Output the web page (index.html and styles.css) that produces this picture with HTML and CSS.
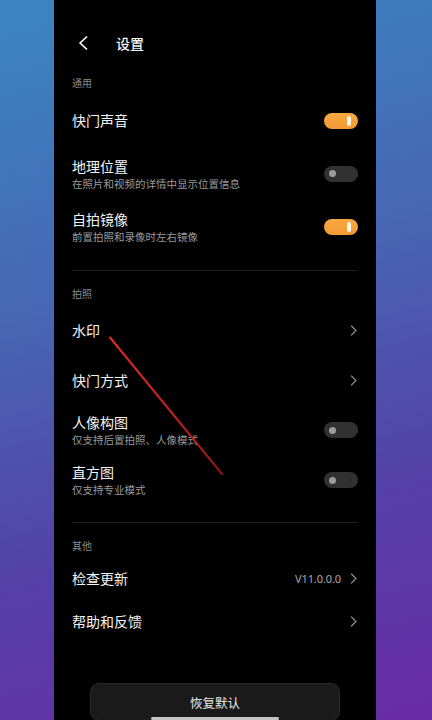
FILE: index.html
```html
<!DOCTYPE html>
<html lang="zh-CN">
<head>
<meta charset="utf-8">
<title>设置</title>
<link rel="stylesheet" href="styles.css">
</head>
<body>
<div class="phone">
  <header class="topbar">
    <svg class="back" width="10" height="14" viewBox="0 0 10 14"><path d="M8.5 1 L2 7 L8.5 13" fill="none" stroke="#fff" stroke-width="1.7" stroke-linecap="round" stroke-linejoin="round"/></svg>
    <h1 class="page-title">设置</h1>
  </header>

  <section class="section sec-general">
    <div class="group-label">通用</div>
    <div class="row">
      <div class="text"><div class="title">快门声音</div></div>
      <span class="switch on"></span>
    </div>
    <div class="row">
      <div class="text"><div class="title">地理位置</div><div class="sub">在照片和视频的详情中显示位置信息</div></div>
      <span class="switch"></span>
    </div>
    <div class="row">
      <div class="text"><div class="title">自拍镜像</div><div class="sub">前置拍照和录像时左右镜像</div></div>
      <span class="switch on"></span>
    </div>
  </section>

  <section class="section sec-photo">
    <div class="group-label">拍照</div>
    <div class="row">
      <div class="text"><div class="title">水印</div></div>
      <svg class="chev" width="7" height="11" viewBox="0 0 7 11"><path d="M1.5 1 L6 5.5 L1.5 10" fill="none" stroke="#8a8a8a" stroke-width="1.2" stroke-linecap="round" stroke-linejoin="round"/></svg>
    </div>
    <div class="row">
      <div class="text"><div class="title">快门方式</div></div>
      <svg class="chev" width="7" height="11" viewBox="0 0 7 11"><path d="M1.5 1 L6 5.5 L1.5 10" fill="none" stroke="#8a8a8a" stroke-width="1.2" stroke-linecap="round" stroke-linejoin="round"/></svg>
    </div>
    <div class="row">
      <div class="text"><div class="title">人像构图</div><div class="sub">仅支持后置拍照、人像模式</div></div>
      <span class="switch"></span>
    </div>
    <div class="row">
      <div class="text"><div class="title">直方图</div><div class="sub">仅支持专业模式</div></div>
      <span class="switch"></span>
    </div>
  </section>

  <section class="section sec-other">
    <div class="group-label">其他</div>
    <div class="row">
      <div class="text"><div class="title">检查更新</div></div>
      <div class="trail"><span class="value">V11.0.0.0</span>
      <svg class="chev" width="7" height="11" viewBox="0 0 7 11"><path d="M1.5 1 L6 5.5 L1.5 10" fill="none" stroke="#8a8a8a" stroke-width="1.2" stroke-linecap="round" stroke-linejoin="round"/></svg></div>
    </div>
    <div class="row">
      <div class="text"><div class="title">帮助和反馈</div></div>
      <svg class="chev" width="7" height="11" viewBox="0 0 7 11"><path d="M1.5 1 L6 5.5 L1.5 10" fill="none" stroke="#8a8a8a" stroke-width="1.2" stroke-linecap="round" stroke-linejoin="round"/></svg>
    </div>
  </section>

  <div class="footer">
    <button class="reset">恢复默认</button>
  </div>

  <div class="home-bar"></div>

  <svg class="annotation" width="322" height="720" viewBox="0 0 322 720">
    <defs>
      <linearGradient id="redfade" x1="56" y1="337" x2="168" y2="474" gradientUnits="userSpaceOnUse">
        <stop offset="0" stop-color="#e42a2a"/>
        <stop offset="0.6" stop-color="#c02020"/>
        <stop offset="1" stop-color="#8a1818"/>
      </linearGradient>
    </defs>
    <line x1="56" y1="337.5" x2="168" y2="474" stroke="url(#redfade)" stroke-width="2" stroke-linecap="round"/>
  </svg>
</div>
</body>
</html>
```
FILE: styles.css
```css
* { box-sizing: border-box; }

html, body {
  margin: 0;
  padding: 0;
  width: 432px;
  height: 720px;
  overflow: hidden;
}

body {
  background: linear-gradient(165deg, #3a86c2 0%, #4767b4 38%, #553fa6 72%, #6a2ca6 100%);
  font-family: "Noto Sans CJK SC", "Noto Sans", sans-serif;
  display: flex;
  justify-content: flex-start;
}

.phone {
  position: relative;
  width: 322px;
  height: 720px;
  margin-left: 54px;
  background: #000;
  overflow: hidden;
}

.topbar {
  height: 60px;
  padding: 26px 0 0 24px;
  display: flex;
  align-items: center;
}

.back {
  display: block;
  flex: none;
}

.page-title {
  margin: 0 0 0 28px;
  font-size: 14px;
  font-weight: 500;
  color: #f4f4f4;
  line-height: 20px;
}

.section {
  margin: 0 18px;
  padding: 6px 0 17px;
  border-bottom: 1px solid #1e1e1e;
}

.section.sec-other {
  border-bottom: none;
  padding-bottom: 0;
}

.group-label {
  height: 28px;
  padding-top: 10px;
  font-size: 10px;
  line-height: 14px;
  color: #8c8c8c;
}

.row {
  display: flex;
  align-items: center;
  justify-content: space-between;
  height: 50px;
}

.sec-general .row { height: 53px; }
.sec-photo .row { height: 50px; }
.sec-other .row { height: 43px; }

.title {
  font-size: 14px;
  line-height: 19px;
  color: #f4f4f4;
}

.sub {
  font-size: 10.5px;
  line-height: 15px;
  color: #9a9a9a;
  white-space: nowrap;
}

.switch {
  position: relative;
  flex: none;
  width: 34px;
  height: 16px;
  border-radius: 8px;
  background: #313131;
}

.switch::after {
  content: "";
  position: absolute;
  left: 5px;
  top: 4.5px;
  width: 7px;
  height: 7px;
  border-radius: 50%;
  background: #9c9c9c;
}

.switch.on {
  background: linear-gradient(180deg, #f8a942 0%, #f29a34 100%);
}

.switch.on::after {
  left: 23px;
  top: 3px;
  width: 3.5px;
  height: 10px;
  border-radius: 2px;
  background: #fff6e6;
}

.chev {
  display: block;
  flex: none;
  margin-right: 1px;
}

.trail {
  display: flex;
  align-items: center;
  gap: 9px;
}

.value {
  font-family: "Noto Sans", Roboto, sans-serif;
  font-size: 11px;
  color: #a8a8a8;
  letter-spacing: -0.1px;
}

.footer {
  display: flex;
  justify-content: center;
  padding-top: 40px;
}

.reset {
  width: 250px;
  height: 38px;
  border: 1px solid #2a2a2a;
  border-radius: 9px;
  background: #1a1a1a;
  color: #e6e6e6;
  font-family: "Noto Sans CJK SC", sans-serif;
  font-size: 12.5px;
  padding: 0;
}

.home-bar {
  position: absolute;
  left: 97px;
  bottom: 0;
  width: 128px;
  height: 3px;
  border-radius: 2px;
  background: #c4c4c4;
}

.annotation {
  position: absolute;
  left: 0;
  top: 0;
  pointer-events: none;
}
```
